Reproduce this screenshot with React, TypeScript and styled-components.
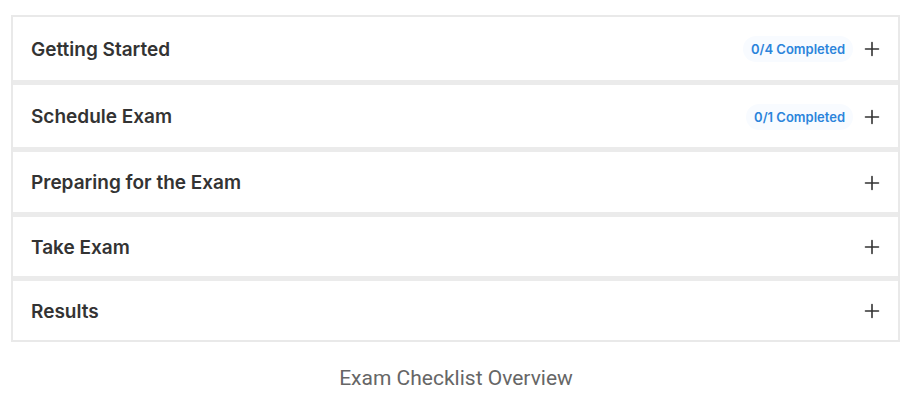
import React from "react";
import styled, { createGlobalStyle } from "styled-components";

const Global = createGlobalStyle`
  html, body { margin: 0; padding: 0; background: #ffffff; }
  body { font-family: Inter, "Noto Sans", sans-serif; }
`;

const Page = styled.div`
  width: 912px;
  padding-top: 15px;
  display: flex;
  flex-direction: column;
  align-items: flex-start;
`;

const List = styled.div`
  margin-left: 11px;
  width: 889px;
  box-sizing: border-box;
  border: 2px solid #e9e9e9;
  background: #ebebeb;
  display: flex;
  flex-direction: column;
  gap: 5px;
`;

const Row = styled.div<{ $h: number }>`
  height: ${(p) => p.$h}px;
  background: #ffffff;
  display: flex;
  align-items: center;
  padding: 1px 18px 0 18px;
  box-sizing: border-box;
`;

const Title = styled.div`
  flex: 1;
  font-size: 19px;
  font-weight: 600;
  color: #333333;
`;

const Badge = styled.span`
  font-size: 13px;
  font-weight: 600;
  color: #2b84db;
  background: #f8fbff;
  border-radius: 14px;
  padding: 5px 8px;
  margin-right: 11px;
`;

const PlusIcon = () => (
  <svg width="16" height="16" viewBox="0 0 16 16" fill="none">
    <path d="M8 1.5v13M1.5 8h13" stroke="#333" strokeWidth="1.6" strokeLinecap="round" />
  </svg>
);

const Caption = styled.div`
  align-self: stretch;
  text-align: center;
  margin-top: 22px;
  font-family: Roboto, "Liberation Sans", sans-serif;
  font-size: 21px;
  color: #666666;
  line-height: 28px;
`;

const items = [
  { title: "Getting Started", badge: "0/4 Completed", h: 63 },
  { title: "Schedule Exam", badge: "0/1 Completed", h: 62 },
  { title: "Preparing for the Exam", h: 60 },
  { title: "Take Exam", h: 59 },
  { title: "Results", h: 59 },
];

export default function App() {
  return (
    <>
      <Global />
      <Page>
        <List>
          {items.map((it) => (
            <Row key={it.title} $h={it.h}>
              <Title>{it.title}</Title>
              {it.badge && <Badge>{it.badge}</Badge>}
              <PlusIcon />
            </Row>
          ))}
        </List>
        <Caption>Exam Checklist Overview</Caption>
      </Page>
    </>
  );
}
